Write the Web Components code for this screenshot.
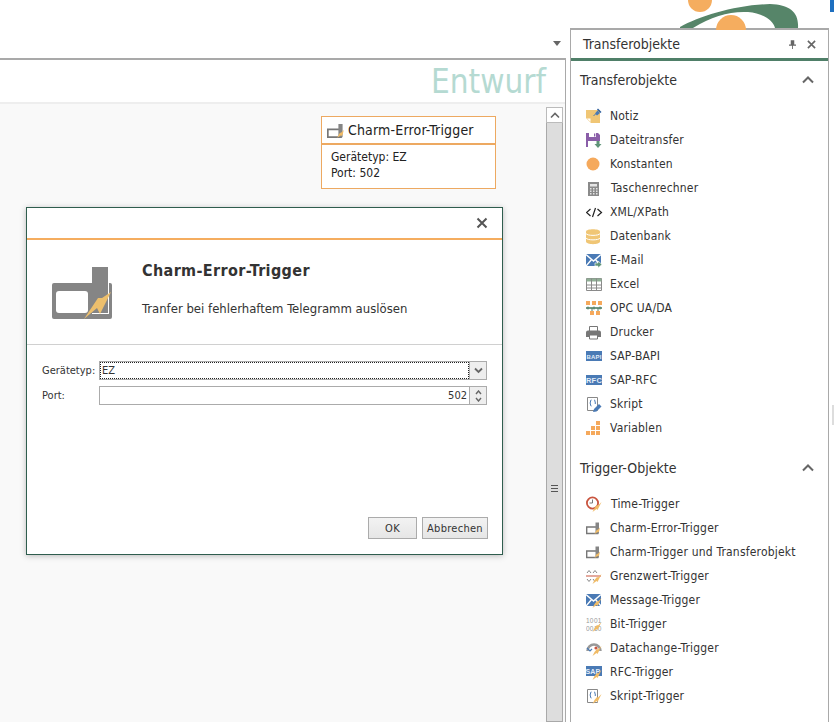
<!DOCTYPE html>
<html lang="de"><head><meta charset="utf-8"><title>Transferobjekte</title>
<style>
html,body{margin:0;padding:0;background:#fff}
body{width:834px;height:722px;overflow:hidden;font:12px "DejaVu Sans Condensed","DejaVu Sans",sans-serif;color:#333}
</style></head><body>
<app-shell>
  <doc-pane slot="doc">
    <flow-card slot="canvas"></flow-card>
    <trigger-dialog slot="canvas"></trigger-dialog>
  </doc-pane>
  <tool-panel slot="panel" title="Transferobjekte">
    <tool-section heading="Transferobjekte" style="--top:7px;--gap:12px">
      <tool-item icon="notiz">Notiz</tool-item>
      <tool-item icon="file">Dateitransfer</tool-item>
      <tool-item icon="circle">Konstanten</tool-item>
      <tool-item icon="calc" shift="1">Taschenrechner</tool-item>
      <tool-item icon="xml">XML/XPath</tool-item>
      <tool-item icon="db">Datenbank</tool-item>
      <tool-item icon="mail">E-Mail</tool-item>
      <tool-item icon="excel">Excel</tool-item>
      <tool-item icon="opc">OPC UA/DA</tool-item>
      <tool-item icon="print">Drucker</tool-item>
      <tool-item icon="bapi">SAP-BAPI</tool-item>
      <tool-item icon="rfc">SAP-RFC</tool-item>
      <tool-item icon="script">Skript</tool-item>
      <tool-item icon="vars">Variablen</tool-item>
    </tool-section>
    <tool-section heading="Trigger-Objekte" style="--top:16px;--gap:12px">
      <tool-item icon="time" shift="1">Time-Trigger</tool-item>
      <tool-item icon="charm">Charm-Error-Trigger</tool-item>
      <tool-item icon="charm">Charm-Trigger und Transferobjekt</tool-item>
      <tool-item icon="limit">Grenzwert-Trigger</tool-item>
      <tool-item icon="msg">Message-Trigger</tool-item>
      <tool-item icon="bit">Bit-Trigger</tool-item>
      <tool-item icon="gauge">Datachange-Trigger</tool-item>
      <tool-item icon="sap">RFC-Trigger</tool-item>
      <tool-item icon="strig">Skript-Trigger</tool-item>
    </tool-section>
  </tool-panel>
</app-shell>
<script>
const bolt='<path d="M15.500 6 12 9.500 11 9 8.500 12 6.500 16 10.500 13 11.500 14z" fill="#f0bb66"/>';
const ICONS={
notiz:'<path d="M0 2h14v13H5l-5-5z" fill="#f0c675"/><path d="M1 10.500h3.500V14z" fill="#fff"/><path d="M9 5.500l2.500-3 2.500 2.500-3 2.500z" fill="#4a7ab5"/><path d="M7.500 8 9.500 6" stroke="#4a7ab5"/><path d="M11.500 1l3.500 3.500" stroke="#2f5f9e" stroke-width="1.500"/>',
file:'<path d="M0 1h12l2 2v6H9v6H0z" fill="#8a5ea8"/><path d="M3 1h7v4H3z" fill="#fff"/><path d="M8 1.500h1.300v3H8z" fill="#8a5ea8"/><path d="M2 9h7v6H2z" fill="#fff"/><path d="M10.500 9h3v3h2L12 16l-3.500-4h2z" fill="#5f9478"/>',
circle:'<circle cx="7" cy="8" r="6.500" fill="#f5a95c"/>',
calc:'<path d="M2 2h11v14H2z" fill="#8a8a8a"/><path d="M4 4h7v2.500H4z" fill="#e4e4e4"/><path d="M4 8h1.500v1.500H4zM7 8h1.500v1.500H7zM10 8h1.500v1.500H10zM4 10.500h1.500V12H4zM7 10.500h1.500V12H7zM10 10.500h1.500V12H10zM4 13h1.500v1.500H4zM7 13h1.500v1.500H7zM10 13h1.500v1.500H10z" fill="#e4e4e4"/>',
xml:'<path d="M4.500 5 .5 8.500l4 3.500M11.500 5l4 3.500-4 3.500M9.500 4 6.500 13" fill="none" stroke="#222" stroke-width="1.200"/>',
db:'<path d="M0 3.500C0 .5 14 .5 14 3.500v10c0 3.500-14 3.500-14 0z" fill="#f0c675"/><path d="M0 5.500c1 2.500 13 2.500 14 0M0 10c1 2.500 13 2.500 14 0" fill="none" stroke="#fff" stroke-width="1"/>',
mail:'<path d="M0 2h15v12H0z" fill="#4a7ab5"/><path d="M0 2.500 7.500 9 15 2.500M0 14l6-7M15 14 9 7" fill="none" stroke="#fff" stroke-width="1.400"/><path d="M9 11h3V9l4 3.500L12 16v-2H9z" fill="#5f9478" stroke="#fff" stroke-width=".6"/>',
excel:'<path d="M.5 2.500h15v12H.5z" fill="#fff" stroke="#8a8a8a"/><path d="M.5 2.500h15v3H.5z" fill="#8fae95"/><path d="M.5 9h15M.5 12h15M5.500 2.500v12M10.500 2.500v12" stroke="#8a8a8a" fill="none"/>',
opc:'<path d="M0 1h4v4H0zM6 1h4v4H6zM12 1h4v4h-4zM4 11h4v4H4zM10 11h4v4h-4z" fill="#f5a95c"/><path d="M0 8h16" stroke="#4f7f68" stroke-width="1.600"/><path d="M2 6.500v3M8 6.500v3M14 6.500v3M6 8v3M12 8v3" stroke="#4f7f68"/>',
print:'<path d="M3.500 2.500h8v5h-8z" fill="#fff" stroke="#777"/><path d="M0 8.500q0-2 2-2h11q2 0 2 2V13h-3v-2H3v2H0z" fill="#777"/><path d="M3.500 11h8v4h-8z" fill="#fff" stroke="#777"/>',
bapi:'<path d="M0 3h16v10H0z" fill="#4a7ab5"/><text x="8" y="10.500" text-anchor="middle" font-family="Liberation Sans" font-weight="700" font-size="6" fill="#e3edf8">BAPI</text>',
rfc:'<path d="M0 3h16v10H0z" fill="#4a7ab5"/><text x="8" y="11" text-anchor="middle" font-family="Liberation Sans" font-weight="700" font-size="7.500" fill="#e3edf8">RFC</text>',
script:'<path d="M1.500 1.500h10v13h-10z" fill="#fff" stroke="#888"/><path d="M5.500 4Q4.500 4 4.500 5v1L4 7l.5 1v1q0 1 1 1M8 4q1 0 1 1v1l.5 1-.5 1" fill="none" stroke="#4a7ab5"/><path d="M7 16l1-3 5-5 2.500 2.500-5 5z" fill="#4a7ab5"/>',
vars:'<path d="M10 1h4v4h-4zM5 6h4v4H5zM10 6h4v4h-4zM0 11h4v4H0zM5 11h4v4H5zM10 11h4v4h-4z" fill="#f5a95c"/>',
time:'<circle cx="6.500" cy="7" r="5.600" fill="#fff" stroke="#c9553f" stroke-width="1.800"/><path d="M6.500 3.500v3.500H3.500" fill="none" stroke="#777"/>'+bolt,
charm:'<path d="M.7 7h11v6.500H.7z" fill="#fff" stroke="#777" stroke-width="1.400"/><path d="M9.500 2.500h3.500v11H9.500z" fill="#858585"/><path d="M14 7.500 11.500 10l-.5-.5-1 1.500-1.500 3 3-2 .5.500 1-1z" fill="#f0bb66"/>',
limit:'<path d="M1 5l2-2.500L5 5M7 5l2-2.500L11 5" fill="none" stroke="#888"/><path d="M0 8h15" stroke="#c9553f"/><path d="M1 11l2 2.500 2-2.500M7 11l1.500 2" fill="none" stroke="#888"/>'+bolt,
msg:'<path d="M0 2h15v12H0z" fill="#4a7ab5"/><path d="M0 2.500 7.500 9 15 2.500M0 14l6-7M15 14 9 7" fill="none" stroke="#fff" stroke-width="1.400"/>'+bolt,
bit:'<text x="0" y="7" font-family="Liberation Sans" font-size="6.500" fill="#999">10</text><text x="8" y="7" font-family="Liberation Sans" font-size="6.500" fill="#999">01</text><text x="0" y="14.500" font-family="Liberation Sans" font-size="6.500" fill="#999">00</text><text x="8" y="14.500" font-family="Liberation Sans" font-size="6.500" fill="#999">10</text>'+bolt,
gauge:'<path d="M1.500 11A6.500 6.500 0 0 1 14.500 11" fill="none" stroke="#999" stroke-width="2.500"/><path d="M1 8l3 3 2-2" fill="none" stroke="#4a7ab5" stroke-width="1.200"/><circle cx="10" cy="8" r="1.600" fill="#c9553f"/>'+bolt,
sap:'<path d="M0 2h16v10H0z" fill="#4a7ab5"/><text x="7" y="10" text-anchor="middle" font-family="Liberation Sans" font-weight="700" font-size="7" fill="#e3edf8">SAP</text>'+bolt,
strig:'<path d="M1.500 1.500h10v13h-10z" fill="#fff" stroke="#888"/><path d="M5.500 4Q4.500 4 4.500 5v1L4 7l.5 1v1q0 1 1 1M8 4q1 0 1 1v1l.5 1-.5 1" fill="none" stroke="#4a7ab5"/>'+bolt
};
function def(name,css,html){
  customElements.define(name,class extends HTMLElement{
    constructor(){super();const r=this.attachShadow({mode:'open'});r.innerHTML='<style>'+css+'</style>'+(typeof html==='function'?html(this):html);}
  });
}
def('app-shell',`
:host{display:grid;grid-template-columns:566px 259px;column-gap:4px;width:834px;height:722px;position:relative;overflow:hidden}
.logo{position:absolute;left:670px;top:0}
.tab{position:absolute;left:830px;top:0;width:4px;height:12px;background:#1e6fc0}
.grip{position:absolute;left:832px;top:405px;width:2px;height:20px;background:#ddd}
`,`<slot name="doc"></slot><slot name="panel"></slot>
<svg class="logo" width="140" height="30" viewBox="670 0 140 30" aria-hidden="true">
<circle cx="700" cy="0" r="12" fill="#f5ad5f"/>
<path d="M680 27C700 16 735 5 770 4 790 5 799 12 798 28H775C773 20 762 13 748 12 730 11 712 16 693 28H680z" fill="#568569"/>
<circle cx="731" cy="30" r="15" fill="#f5ad5f"/>
</svg><div class="tab"></div><div class="grip"></div>`);
def('doc-pane',`
:host{display:flex;flex-direction:column;height:722px;position:relative;font-size:12px}
.top{height:58px;flex:none;position:relative;display:flex;justify-content:flex-end;align-items:flex-end}
.tri{width:0;height:0;border:4.500px solid transparent;border-top:5px solid #666;border-bottom:0;margin:0 5px 12px 0}
.main{flex:1;border-top:2px solid #a9a9a9;border-right:1px solid #a9a9a9;display:flex;flex-direction:column;min-height:0}
.head{height:42px;flex:none;background:#fff;border-bottom:2px solid #eee;display:flex;justify-content:flex-end;align-items:center;padding-right:19px;font:33px "DejaVu Sans Condensed","DejaVu Sans",sans-serif;color:#b5dad2}
.body{flex:1;display:flex;background:#f9f9f9;min-height:0}
.canvas{flex:1}
scroll-bar{flex:none}
`,`<div class="top"><div class="tri"></div></div><div class="main"><div class="head"><span>Entwurf</span></div><div class="body"><div class="canvas"><slot name="canvas"></slot></div><scroll-bar></scroll-bar></div></div>`);
def('scroll-bar',`
:host{display:flex;flex-direction:column;width:17px;margin-right:2px;box-sizing:border-box;padding-top:3px}
.up{height:16px;width:17px;background:#fff;border:1px solid #bbb;box-sizing:border-box;display:flex;align-items:center;justify-content:center;flex:none}
.th{flex:1;width:17px;background:#ddd;border:1px solid #a9a9a9;border-top:0;box-sizing:border-box;display:flex;align-items:flex-start;justify-content:center;padding-top:362px}
.g{width:7px;height:5px;border-top:1px solid #555;border-bottom:1px solid #555;position:relative}
.g:after{content:"";position:absolute;left:0;right:0;top:2px;height:1px;background:#555}
`,`<div class="up"><svg width="10" height="7" viewBox="0 0 10 7"><path d="M1 5.500 5 1.500l4 4" fill="none" stroke="#666" stroke-width="1.600"/></svg></div><div class="th"><div class="g"></div></div>`);
def('flow-card',`
:host{display:block;position:absolute;left:321px;top:116px;width:175px;height:73px;box-sizing:border-box;border:1px solid #eda961;background:#fff}
.h{height:26px;border-bottom:2px solid #eda961;display:flex;align-items:center;gap:3px;padding-left:5px;font-size:14px;letter-spacing:.17px;color:#222}
.b{padding:4px 9px;line-height:16px;color:#222}
svg{flex:none}
`,`<div class="h"><svg width="18" height="18" viewBox="0 0 15 15">${ICONS.charm}</svg><span>Charm-Error-Trigger</span></div><div class="b"><div>Gerätetyp: EZ</div><div>Port: 502</div></div>`);
def('trigger-dialog',`
:host{display:flex;flex-direction:column;position:absolute;left:26px;top:207px;width:477px;height:348px;box-sizing:border-box;background:#fff;border:1px solid #2f5d4e;box-shadow:0 1px 6px rgba(0,0,0,.25)}
.tb{height:30px;flex:none;border-bottom:2px solid #f5ad5f;display:flex;justify-content:flex-end;align-items:center;padding-right:14px}
.hero{height:104px;flex:none;border-bottom:1px solid #d0d0d0;display:flex}
.ico{width:115px;flex:none;display:flex;justify-content:flex-end;padding:27px 30px 0 0;box-sizing:border-box}
.txt{padding-top:19px}
h2{margin:0;font:700 16px "DejaVu Sans Condensed","DejaVu Sans",sans-serif;letter-spacing:.37px;color:#333;line-height:24px}
p{margin:18px 0 0;line-height:16px;font-size:13px;color:#333}
.form{flex:1;display:grid;grid-template-columns:57px 388px;grid-auto-rows:19px;row-gap:6px;padding:16px 0 0 15px;align-items:center;align-content:start;font-size:11px}
.foot{flex:none;display:flex;justify-content:flex-end;gap:5px;padding:0 14px 15px 0;font-size:11px;letter-spacing:.28px}
.btn{height:22px;box-sizing:border-box;border:1px solid #ababab;background:linear-gradient(#f2f2f2,#e6e6e6);display:flex;align-items:center;justify-content:center;color:#333}
.ok{width:49px}.ca{width:66px}
.fld{height:19px;box-sizing:border-box;border:1px solid #ababab;display:flex;background:#fff}
.in{flex:1;position:relative;padding:0 3px;line-height:17px;color:#333}
.foc{outline:1px dotted #222;outline-offset:-1px;padding-left:2px}
.r{text-align:right;padding-right:2px}
.bt{width:16px;flex:none;background:#eee;border-left:1px solid #ababab;display:flex;flex-direction:column;align-items:center;justify-content:center;gap:2px}
`,`<div class="tb"><svg width="12" height="12" viewBox="0 0 12 12"><path d="M1.500 1.500l9 9M10.500 1.500l-9 9" stroke="#555" stroke-width="2"/></svg></div>
<div class="hero"><div class="ico"><svg width="60" height="52" viewBox="0 0 60 52"><rect x="0" y="16" width="60" height="36" rx="2" fill="#858585"/><rect x="4" y="24" width="32" height="22" rx="3" fill="#fff"/><path d="M57 16v31H40v-1h16V16z" fill="#fff"/><rect x="40" y="0" width="16" height="46" fill="#858585"/><path d="M59 25 50 31 46 31 38 43 32 52 45 41 48 47z" fill="#edbf6c"/></svg></div>
<div class="txt"><h2>Charm-Error-Trigger</h2><p>Tranfer bei fehlerhaftem Telegramm auslösen</p></div></div>
<div class="form"><div>Gerätetyp:</div><div class="fld"><div class="in foc">EZ</div><div class="bt"><svg width="9" height="7" viewBox="0 0 9 7"><path d="M1 1.500 4.500 5 8 1.500" fill="none" stroke="#666" stroke-width="1.800"/></svg></div></div>
<div>Port:</div><div class="fld"><div class="in r">502</div><div class="bt"><svg width="7" height="5" viewBox="0 0 7 5"><path d="M1 4 3.500 1 6 4" fill="none" stroke="#666" stroke-width="1.400"/></svg><svg width="7" height="5" viewBox="0 0 7 5"><path d="M1 1 3.500 4 6 1" fill="none" stroke="#666" stroke-width="1.400"/></svg></div></div></div>
<div class="foot"><div class="btn ok">OK</div><div class="btn ca">Abbrechen</div></div>`);
def('tool-panel',`
:host{display:flex;flex-direction:column;margin-top:28px;height:694px;box-sizing:border-box;border:1px solid #a9a9a9;border-bottom:0;border-top-width:2px;background:#fff}
.t{height:28px;flex:none;border-bottom:3px solid #4f7f68;box-sizing:content-box;display:flex;align-items:center;padding:0 12px 0 12px;font-size:14px;color:#333;gap:11px}
.t span{flex:1}
`,h=>`<div class="t"><span>${h.getAttribute('title')}</span><svg width="7" height="9" viewBox="0 0 8 10"><path d="M2 0h4v5h2v1.500H4.500V10h-1V6.500H0V5h2z" fill="#666"/></svg><svg width="9" height="9" viewBox="0 0 10 10"><path d="M1 1l8 8M9 1 1 9" stroke="#666" stroke-width="1.800"/></svg></div><slot></slot>`);
def('tool-section',`
:host{display:block;padding-top:var(--top,0)}
.h{height:24px;display:flex;align-items:center;justify-content:space-between;padding:0 14px 0 9px;font-size:14px;color:#333;margin-bottom:var(--gap,11px)}
`,h=>`<div class="h"><span>${h.getAttribute('heading')}</span><svg width="12" height="8" viewBox="0 0 12 8"><path d="M1 6.500 6 1.500l5 5" fill="none" stroke="#666" stroke-width="2"/></svg></div><slot></slot>`);
def('tool-item',`
:host{display:flex;align-items:center;height:24px;padding-left:15px;color:#333;letter-spacing:.19px}
svg{width:17px;height:17px;flex:none}
span{margin-left:7px}
`,h=>`<svg viewBox="0 0 17 17">${ICONS[h.getAttribute('icon')]||''}</svg><span${h.getAttribute('shift')?' style="margin-left:8px"':''}><slot></slot></span>`);
</script>
</body></html>
